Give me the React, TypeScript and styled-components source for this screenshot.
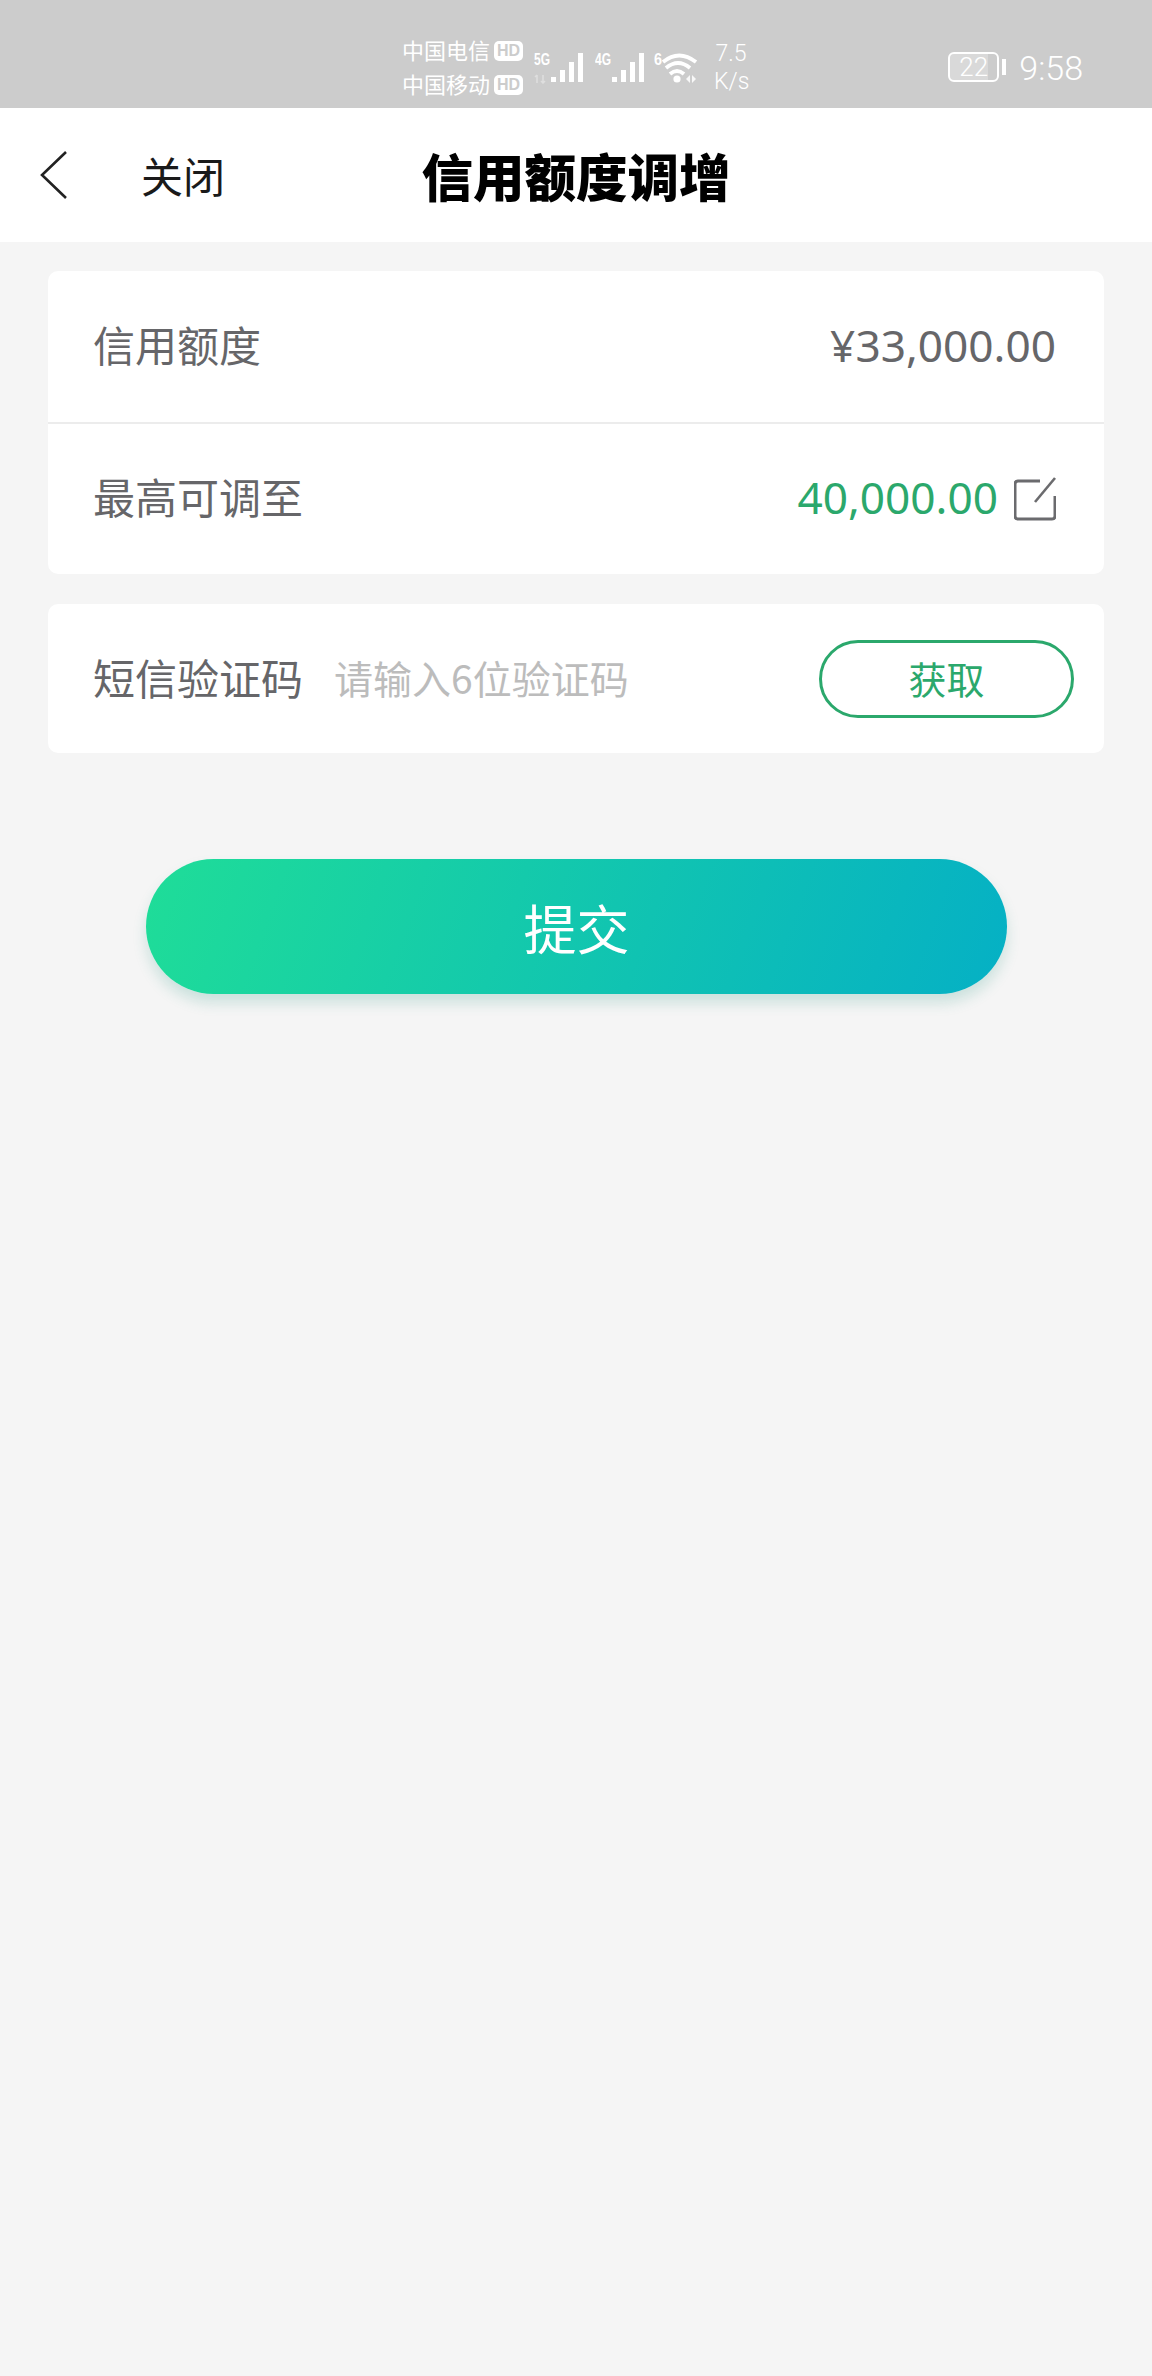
import { createGlobalStyle, styled } from "styled-components";

const colors = {
  page: "#f5f5f5",
  statusBar: "#cccccc",
  text: "#666669",
  green: "#2ba86c",
  placeholder: "#bcbcbc",
  divider: "#ececec",
};

const GlobalStyle = createGlobalStyle`
  html, body {
    margin: 0;
    padding: 0;
    background: ${colors.page};
    font-family: "Noto Sans CJK SC", "Noto Sans", sans-serif;
  }
`;

const Screen = styled.div`
  width: 1152px;
  height: 2376px;
  background: ${colors.page};
  overflow: hidden;
`;

const StatusBar = styled.div`
  height: 108px;
  box-sizing: border-box;
  padding: 28px 69px 0 402px;
  background: ${colors.statusBar};
  color: #fff;
  display: flex;
  align-items: center;
`;

const Carriers = styled.div`
  display: flex;
  flex-direction: column;
  gap: 7px;
  margin-top: -4px;
`;

const Carrier = styled.div`
  display: flex;
  align-items: center;
  gap: 4px;
  font-size: 22px;
  line-height: 27px;
`;

const HdBadge = styled.span`
  width: 29px;
  height: 20px;
  margin-top: 3px;
  border-radius: 5px;
  background: #fff;
  color: ${colors.statusBar};
  font-family: "Liberation Sans", sans-serif;
  font-size: 16px;
  font-weight: 700;
  line-height: 20px;
  text-align: center;
`;

const SignalGroup = styled.div<{ $gap: number }>`
  margin-left: ${(p) => p.$gap}px;
  display: flex;
  align-items: center;
`;

const Speed = styled.div`
  margin-left: 10px;
  width: 34px;
  font-family: Roboto, sans-serif;
  font-weight: 300;
  font-size: 23px;
  line-height: 28px;
  text-align: center;
`;

const BatteryTime = styled.div`
  margin-left: auto;
  display: flex;
  align-items: center;
  gap: 20px;
`;

const Battery = styled.div`
  position: relative;
  width: 51px;
  height: 30px;
  margin-top: -3px;
  box-sizing: border-box;
  border: 2px solid #fff;
  border-radius: 6px;
  background: linear-gradient(90deg, #d9d9d9 0 80%, transparent 80%);
  font-family: Roboto, sans-serif;
  font-weight: 300;
  font-size: 26px;
  line-height: 26px;
  text-align: center;

  &::after {
    content: "";
    position: absolute;
    top: 5px;
    right: -9px;
    width: 4px;
    height: 16px;
    background: #fff;
  }
`;

const Clock = styled.span`
  font-family: Roboto, sans-serif;
  font-weight: 300;
  font-size: 34px;
  line-height: 40px;
`;

const NavBar = styled.div`
  height: 134px;
  background: #fff;
  display: grid;
  grid-template-columns: 1fr auto 1fr;
  align-items: center;
`;

const NavLeft = styled.div`
  display: flex;
  align-items: center;
  padding-left: 40px;
`;

const CloseLabel = styled.span`
  margin-left: 73px;
  font-size: 42px;
  line-height: 56px;
  color: #1a1a1a;
`;

const Title = styled.h1`
  margin: 0;
  font-size: 51.5px;
  line-height: 66px;
  font-weight: 900;
  color: #000;
`;

const Content = styled.div`
  padding: 29px 48px 0;
  display: flex;
  flex-direction: column;
  gap: 30px;
`;

const Card = styled.div`
  background: #fff;
  border-radius: 10px;
`;

const Row = styled.div<{ $divided?: boolean }>`
  height: ${(p) => (p.$divided ? 153 : 150)}px;
  box-sizing: border-box;
  padding: 0 48px 4px 45px;
  display: flex;
  align-items: center;
  justify-content: space-between;
  border-bottom: ${(p) => (p.$divided ? `2px solid ${colors.divider}` : "none")};
`;

const Label = styled.span`
  margin-top: -2px;
  font-size: 42px;
  line-height: 56px;
  color: ${colors.text};
`;

const Amount = styled.span<{ $green?: boolean }>`
  font-family: "Noto Sans", sans-serif;
  font-size: 44.2px;
  line-height: 56px;
  color: ${(p) => (p.$green ? colors.green : colors.text)};
`;

const AmountGroup = styled.div`
  display: flex;
  align-items: center;
  gap: 16px;
`;

const EditSlot = styled.span`
  display: flex;
  margin-top: 3px;
`;

const CodeRow = styled.div`
  height: 149px;
  box-sizing: border-box;
  padding: 0 30px 0 45px;
  display: flex;
  align-items: center;
`;

const CodeLabel = styled(Label)`
  margin-top: -4px;
`;

const Placeholder = styled.span`
  margin: -4px 0 0 31px;
  font-size: 39px;
  line-height: 56px;
  color: ${colors.placeholder};
`;

const FetchButton = styled.button`
  margin-left: auto;
  width: 255px;
  height: 78px;
  box-sizing: border-box;
  padding: 0 0 3px;
  border: 3px solid ${colors.green};
  border-radius: 39px;
  background: #fff;
  color: ${colors.green};
  font-family: inherit;
  font-size: 38px;
`;

const SubmitButton = styled.button`
  display: block;
  width: 861px;
  height: 135px;
  margin: 106px 0 0 146px;
  padding: 0;
  border: none;
  border-radius: 68px;
  background: linear-gradient(110deg, #1fdd98 0%, #05b0c5 100%);
  box-shadow: 0 9px 14px rgba(40, 150, 130, 0.2);
  color: #fff;
  font-family: inherit;
  font-size: 53px;
`;

const SignalBars = ({ label, dim }: { label: string; dim?: boolean }) => (
  <svg width="50" height="32" viewBox="0 0 50 32">
    <text
      x="0"
      y="13"
      fill="#fff"
      fontSize="16"
      fontWeight="700"
      fontFamily="Liberation Sans, sans-serif"
      textLength="16"
      lengthAdjust="spacingAndGlyphs"
    >
      {label}
    </text>
    {dim && (
      <path d="M3 23 V31 M1 25 L3 23 M9 23 V31 M7 29 L9 31 L11 29" fill="none" stroke="#fff" strokeWidth="1.6" opacity="0.35" />
    )}
    <g fill="#fff">
      <rect x="17" y="25" width="5" height="5" />
      <rect x="26" y="18" width="5" height="12" />
      <rect x="35" y="10" width="5" height="20" />
      <rect x="44" y="1" width="5" height="29" />
    </g>
  </svg>
);

const WifiIcon = () => (
  <svg width="50" height="32" viewBox="0 0 50 32">
    <text
      x="0"
      y="13"
      fill="#fff"
      fontSize="16"
      fontWeight="700"
      fontFamily="Liberation Sans, sans-serif"
      textLength="8"
      lengthAdjust="spacingAndGlyphs"
    >
      6
    </text>
    <g fill="none" stroke="#fff" strokeWidth="3.8">
      <path d="M9 10 Q25 -3 42 10" />
      <path d="M12 16 Q24 6 36 16" />
      <path d="M16 22 Q23 16 30 22" />
    </g>
    <circle cx="23" cy="27" r="3.6" fill="#fff" />
    <path d="M36 23 L32 27 L36 31 Z M38 23 L42 27 L38 31 Z" fill="#fff" opacity="0.85" />
  </svg>
);

const BackIcon = () => (
  <svg width="28" height="48" viewBox="0 0 28 48">
    <path d="M26 1 L2 24 L26 47" fill="none" stroke="#222" strokeWidth="2.6" />
  </svg>
);

const EditIcon = () => (
  <svg width="42" height="44" viewBox="0 0 42 44">
    <path
      d="M26 4 H4 Q1 4 1 7 V39 Q1 42 4 42 H38 Q41 42 41 39 V19"
      fill="none"
      stroke="#6b6b6e"
      strokeWidth="3"
    />
    <path d="M21 25 L41 1" fill="none" stroke="#6b6b6e" strokeWidth="2.6" />
  </svg>
);

export default function App() {
  return (
    <Screen>
      <GlobalStyle />
      <StatusBar>
        <Carriers>
          <Carrier>
            中国电信<HdBadge>HD</HdBadge>
          </Carrier>
          <Carrier>
            中国移动<HdBadge>HD</HdBadge>
          </Carrier>
        </Carriers>
        <SignalGroup $gap={11}>
          <SignalBars label="5G" dim />
        </SignalGroup>
        <SignalGroup $gap={11}>
          <SignalBars label="4G" />
        </SignalGroup>
        <SignalGroup $gap={9}>
          <WifiIcon />
        </SignalGroup>
        <Speed>
          7.5
          <br />
          K/s
        </Speed>
        <BatteryTime>
          <Battery>22</Battery>
          <Clock>9:58</Clock>
        </BatteryTime>
      </StatusBar>

      <NavBar>
        <NavLeft>
          <BackIcon />
          <CloseLabel>关闭</CloseLabel>
        </NavLeft>
        <Title>信用额度调增</Title>
        <div />
      </NavBar>

      <Content>
        <Card>
          <Row $divided>
            <Label>信用额度</Label>
            <Amount>¥33,000.00</Amount>
          </Row>
          <Row>
            <Label>最高可调至</Label>
            <AmountGroup>
              <Amount $green>40,000.00</Amount>
              <EditSlot>
                <EditIcon />
              </EditSlot>
            </AmountGroup>
          </Row>
        </Card>
        <Card>
          <CodeRow>
            <CodeLabel>短信验证码</CodeLabel>
            <Placeholder>请输入6位验证码</Placeholder>
            <FetchButton>获取</FetchButton>
          </CodeRow>
        </Card>
      </Content>

      <SubmitButton>提交</SubmitButton>
    </Screen>
  );
}
